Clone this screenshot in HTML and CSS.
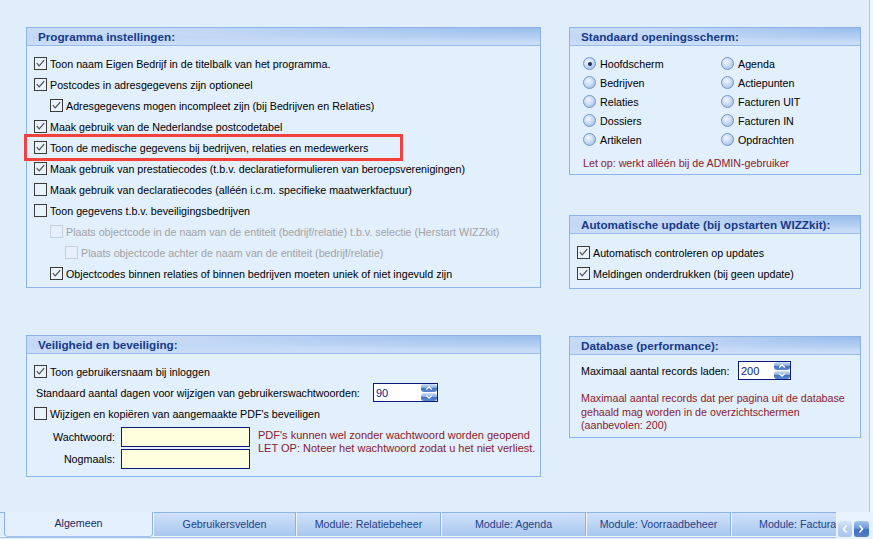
FILE: index.html
```html
<!DOCTYPE html>
<html lang="nl">
<head>
<meta charset="utf-8">
<title>Instellingen</title>
<link rel="stylesheet" href="styles.css">
</head>
<body>
<div class="screen">
  <div class="content">
    <div class="col left">
      <section class="panel p-prog">
        <div class="ph">Programma instellingen:</div>
        <div class="pb">
          <div class="row"><span class="cb"><svg class="ck" viewBox="0 0 11 11"><path d="M1.8 5.2 L4.2 7.8 L9.2 2.2"/></svg></span>Toon naam Eigen Bedrijf in de titelbalk van het programma.</div>
          <div class="row"><span class="cb"><svg class="ck" viewBox="0 0 11 11"><path d="M1.8 5.2 L4.2 7.8 L9.2 2.2"/></svg></span>Postcodes in adresgegevens zijn optioneel</div>
          <div class="row ind1"><span class="cb"><svg class="ck" viewBox="0 0 11 11"><path d="M1.8 5.2 L4.2 7.8 L9.2 2.2"/></svg></span>Adresgegevens mogen incompleet zijn (bij Bedrijven en Relaties)</div>
          <div class="row"><span class="cb"><svg class="ck" viewBox="0 0 11 11"><path d="M1.8 5.2 L4.2 7.8 L9.2 2.2"/></svg></span>Maak gebruik van de Nederlandse postcodetabel</div>
          <div class="row"><span class="cb"><svg class="ck" viewBox="0 0 11 11"><path d="M1.8 5.2 L4.2 7.8 L9.2 2.2"/></svg></span>Toon de medische gegevens bij bedrijven, relaties en medewerkers</div>
          <div class="row"><span class="cb"><svg class="ck" viewBox="0 0 11 11"><path d="M1.8 5.2 L4.2 7.8 L9.2 2.2"/></svg></span>Maak gebruik van prestatiecodes (t.b.v. declaratieformulieren van beroepsverenigingen)</div>
          <div class="row"><span class="cb"></span>Maak gebruik van declaratiecodes (alléén i.c.m. specifieke maatwerkfactuur)</div>
          <div class="row"><span class="cb"></span>Toon gegevens t.b.v. beveiligingsbedrijven</div>
          <div class="row ind1 dis"><span class="cb"></span>Plaats objectcode in de naam van de entiteit (bedrijf/relatie) t.b.v. selectie (Herstart WIZZkit)</div>
          <div class="row ind2 dis"><span class="cb"></span>Plaats objectcode achter de naam van de entiteit (bedrijf/relatie)</div>
          <div class="row ind1"><span class="cb"><svg class="ck" viewBox="0 0 11 11"><path d="M1.8 5.2 L4.2 7.8 L9.2 2.2"/></svg></span>Objectcodes binnen relaties of binnen bedrijven moeten uniek of niet ingevuld zijn</div>
        </div>
      </section>

      <section class="panel p-sec">
        <div class="ph">Veiligheid en beveiliging:</div>
        <div class="pb">
          <div class="row"><span class="cb"><svg class="ck" viewBox="0 0 11 11"><path d="M1.8 5.2 L4.2 7.8 L9.2 2.2"/></svg></span>Toon gebruikersnaam bij inloggen</div>
          <div class="row lbl-row">
            <span class="lbl-days">Standaard aantal dagen voor wijzigen van gebruikerswachtwoorden:</span>
            <span class="num w65">90<span class="spin"><i><svg viewBox="0 0 16 8"><path d="M5.2 5.6 L8 3 L10.8 5.6"/></svg></i><i><svg viewBox="0 0 16 8"><path d="M5.2 2.6 L8 5.2 L10.8 2.6"/></svg></i></span></span>
          </div>
          <div class="row"><span class="cb"></span>Wijzigen en kopiëren van aangemaakte PDF's beveiligen</div>
          <div class="pwgrid">
            <span class="plbl">Wachtwoord:</span>
            <span class="pw"></span>
            <div class="pwnote">PDF's kunnen wel zonder wachtwoord worden geopend<br>LET OP: Noteer het wachtwoord zodat u het niet verliest.</div>
            <span class="plbl">Nogmaals:</span>
            <span class="pw"></span>
          </div>
        </div>
      </section>
    </div>

    <div class="col right">
      <section class="panel p-start">
        <div class="ph">Standaard openingsscherm:</div>
        <div class="pb">
          <div class="radios">
            <div class="rrow"><span class="rd sel"></span>Hoofdscherm</div>
            <div class="rrow"><span class="rd"></span>Agenda</div>
            <div class="rrow"><span class="rd"></span>Bedrijven</div>
            <div class="rrow"><span class="rd"></span>Actiepunten</div>
            <div class="rrow"><span class="rd"></span>Relaties</div>
            <div class="rrow"><span class="rd"></span>Facturen UIT</div>
            <div class="rrow"><span class="rd"></span>Dossiers</div>
            <div class="rrow"><span class="rd"></span>Facturen IN</div>
            <div class="rrow"><span class="rd"></span>Artikelen</div>
            <div class="rrow"><span class="rd"></span>Opdrachten</div>
          </div>
          <div class="note start-note">Let op: werkt alléén bij de ADMIN-gebruiker</div>
        </div>
      </section>

      <section class="panel p-upd">
        <div class="ph">Automatische update (bij opstarten WIZZkit):</div>
        <div class="pb">
          <div class="row"><span class="cb"><svg class="ck" viewBox="0 0 11 11"><path d="M1.8 5.2 L4.2 7.8 L9.2 2.2"/></svg></span>Automatisch controleren op updates</div>
          <div class="row"><span class="cb"><svg class="ck" viewBox="0 0 11 11"><path d="M1.8 5.2 L4.2 7.8 L9.2 2.2"/></svg></span>Meldingen onderdrukken (bij geen update)</div>
        </div>
      </section>

      <section class="panel p-db">
        <div class="ph">Database (performance):</div>
        <div class="pb">
          <div class="row">
            <span class="lbl-max">Maximaal aantal records laden:</span>
            <span class="num w53">200<span class="spin"><i><svg viewBox="0 0 16 8"><path d="M5.2 5.6 L8 3 L10.8 5.6"/></svg></i><i><svg viewBox="0 0 16 8"><path d="M5.2 2.6 L8 5.2 L10.8 2.6"/></svg></i></span></span>
          </div>
          <div class="note db-note">Maximaal aantal records dat per pagina uit de database<br>gehaald mag worden in de overzichtschermen<br>(aanbevolen: 200)</div>
        </div>
      </section>
    </div>
  </div>

  <div class="tabbar">
    <div class="tablist">
      <div class="tab active">Algemeen</div>
      <div class="tab first">Gebruikersvelden</div>
      <div class="tab">Module: Relatiebeheer</div>
      <div class="tab">Module: Agenda</div>
      <div class="tab">Module: Voorraadbeheer</div>
      <div class="tab last">Module: Factura</div>
    </div>
    <div class="tabnav">
      <span class="nb prev"><svg viewBox="0 0 14 16"><path d="M8.5 4.5 L5.5 8 L8.5 11.5"/></svg></span>
      <span class="nb next"><svg viewBox="0 0 14 16"><path d="M5.5 4.5 L8.5 8 L5.5 11.5"/></svg></span>
    </div>
  </div>

  <div class="highlight"></div>
</div>
</body>
</html>
```

FILE: styles.css
```css
html, body {
  margin: 0;
  padding: 0;
}

body {
  width: 873px;
  height: 539px;
  overflow: hidden;
  background: #edf5fe;
  font-family: "Liberation Sans", Arial, sans-serif;
  font-size: 10.7px;
  color: #000;
}

.screen {
  position: relative;
  width: 873px;
  height: 539px;
  display: flex;
  flex-direction: column;
}

.content {
  box-sizing: border-box;
  width: 870px;
  height: 512px;
  flex: none;
  padding-left: 26px;
  border-right: 1px solid #a9c7ee;
  background: #e0eefc;
  display: flex;
  gap: 28px;
}

.col {
  display: flex;
  flex-direction: column;
}

.left { width: 515px; }
.right { width: 292px; }

.panel {
  box-sizing: border-box;
  border: 1px solid #8eb3e7;
  background: #e2effd;
  flex: none;
}

.ph {
  height: 17px;
  line-height: 17px;
  border-bottom: 1px solid #98bbea;
  padding-left: 11px;
  font-weight: bold;
  font-size: 11.7px;
  color: #173a8b;
  white-space: nowrap;
  overflow: hidden;
  background:
    radial-gradient(ellipse 75% 80% at 100% 0%, #98bcec 0%, rgba(152, 188, 236, 0) 100%),
    linear-gradient(180deg, #c9dcf7 0%, #c1d7f5 55%, #cbdef7 100%);
}

.p-prog { margin-top: 27px; height: 261px; }
.p-sec { margin-top: 47px; height: 142px; }
.p-start { margin-top: 27px; height: 148px; }
.p-upd { margin-top: 40px; height: 74px; }
.p-db { margin-top: 47px; height: 102px; }

.pb {
  padding: 7px 0 0 7px;
}

.row {
  display: flex;
  align-items: center;
  height: 21px;
  white-space: nowrap;
}

.ind1 { padding-left: 16px; }
.ind2 { padding-left: 31px; }

.cb {
  box-sizing: border-box;
  width: 13px;
  height: 13px;
  flex: none;
  margin-right: 3px;
  border: 1px solid #3b3b3b;
  background: #e9f2fd;
  display: flex;
  align-items: center;
  justify-content: center;
}

.ck {
  display: block;
  width: 11px;
  height: 11px;
  fill: none;
  stroke: #505050;
  stroke-width: 1.25;
}

.dis { color: #a2a2a2; }
.dis .cb {
  border-color: #c6cfdc;
  background: #e6f0fc;
}

/* Standaard openingsscherm */
.p-start .pb { padding: 8px 0 0 13px; }

.radios {
  display: grid;
  grid-template-columns: 138px 138px;
  grid-auto-rows: 19px;
}

.rrow {
  display: flex;
  align-items: center;
  white-space: nowrap;
}

.rd {
  box-sizing: border-box;
  position: relative;
  width: 13px;
  height: 13px;
  flex: none;
  margin-right: 4px;
  border-radius: 50%;
  border: 1px solid #7493c6;
  background: radial-gradient(circle at 40% 35%, #f2f7fe 0%, #cadcf4 45%, #93b3e2 100%);
}

.rd.sel::after {
  content: "";
  position: absolute;
  left: 3.5px;
  top: 3.5px;
  width: 4px;
  height: 4px;
  border-radius: 50%;
  background: #1c2a5c;
}

.note {
  color: #8b1a2b;
  white-space: nowrap;
}

.start-note {
  margin-top: 7px;
  line-height: 14px;
}

/* Automatische update */
.p-upd .pb { padding: 8px 0 0 7px; }

/* Veiligheid */
.lbl-row { padding-left: 2px; }

.lbl-days {
  width: 337px;
  flex: none;
}

.num {
  box-sizing: border-box;
  height: 19px;
  flex: none;
  display: flex;
  align-items: center;
  padding-left: 2px;
  border: 1px solid #0d1977;
  background: #fff;
  color: #0b1c8c;
  font-size: 11px;
}

.w65 { width: 65px; }
.w53 { width: 53px; }

.spin {
  margin-left: auto;
  align-self: stretch;
  display: flex;
  flex-direction: column;
  gap: 1px;
}

.spin i {
  display: block;
  width: 16px;
  height: 8px;
  border-radius: 3px;
  background: linear-gradient(180deg, #d3e3f8 0%, #88acdf 45%, #4474c4 55%, #5d8ad1 100%);
}

.spin svg {
  display: block;
  width: 16px;
  height: 8px;
  fill: none;
  stroke: #ffffff;
  stroke-width: 1.3;
}

.pwgrid {
  margin-top: 3px;
  display: grid;
  grid-template-columns: 81px 129px auto;
  grid-template-rows: 20px 20px;
  column-gap: 6px;
  row-gap: 2px;
}

.pwgrid .pwnote {
  grid-column: 3;
  grid-row: 1 / span 2;
  margin-left: 2px;
  padding-top: 2px;
  font-size: 11px;
  line-height: 13px;
  color: #8b1a2b;
  white-space: nowrap;
}

.plbl {
  display: flex;
  align-items: center;
  justify-content: flex-end;
}

.pw {
  box-sizing: border-box;
  border: 1px solid #0d1977;
  background: #ffffdd;
}

/* Database */
.p-db .pb { padding: 5px 0 0 11px; }

.lbl-max {
  width: 157px;
  flex: none;
}

.db-note {
  margin-top: 11px;
  line-height: 13.5px;
}

/* Tabs */
.tabbar {
  height: 27px;
  flex: none;
  display: flex;
}

.tablist {
  box-sizing: border-box;
  width: 836px;
  height: 27px;
  flex: none;
  padding-left: 4px;
  display: flex;
  align-items: flex-start;
  overflow: hidden;
  background:
    linear-gradient(#8eb3e7, #8eb3e7) 0 0 / 100% 1px no-repeat,
    linear-gradient(#f2f8fe, #f2f8fe) 0 24px / 100% 1px no-repeat,
    linear-gradient(#a4c4ee, #a4c4ee) 0 25px / 100% 1px no-repeat,
    #e0eefc;
}

.tab {
  box-sizing: border-box;
  flex: none;
  width: 145px;
  height: 24px;
  line-height: 22px;
  text-align: center;
  white-space: nowrap;
  color: #213f8c;
  border-top: 1px solid #8eb3e7;
  border-left: 1px solid #eef5fe;
  border-right: 1px solid #8db2e6;
  background: linear-gradient(180deg, #cfe1f8 0%, #bcd4f4 50%, #a9c7ef 100%);
}

.tab.first { width: 143px; }

.tab.last {
  width: 105px;
  border-right: none;
  text-align: left;
  padding-left: 27px;
}

.tab.active {
  width: 149px;
  height: 25px;
  line-height: 23px;
  color: #1b2a66;
  border-top: none;
  border-left: 1px solid #8eb3e7;
  border-right: 1px solid #8eb3e7;
  border-bottom: 1px solid #a4c4ee;
  border-radius: 0 0 4px 4px;
  background: #e4f0fd;
}

.tabnav {
  flex: 1;
  height: 27px;
  box-sizing: border-box;
  padding: 9px 0 0 2px;
  display: flex;
  gap: 2px;
  background: #e8f2fd;
}

.nb {
  display: block;
  width: 14px;
  height: 16px;
  border-radius: 3px;
}

.nb svg {
  display: block;
  width: 14px;
  height: 16px;
  fill: none;
  stroke: #ffffff;
  stroke-width: 1.6;
}

.nb.prev {
  background: linear-gradient(180deg, #d5e4f8 0%, #b8cff0 50%, #a9c4ec 100%);
}

.nb.next {
  width: 15px;
  background: linear-gradient(180deg, #a8c4ee 0%, #6e98da 45%, #3f6fc3 55%, #4f7fcc 100%);
}

.highlight {
  position: absolute;
  left: 24px;
  top: 134px;
  width: 379px;
  height: 27px;
  box-sizing: border-box;
  border: 3px solid #f3413f;
}
```
